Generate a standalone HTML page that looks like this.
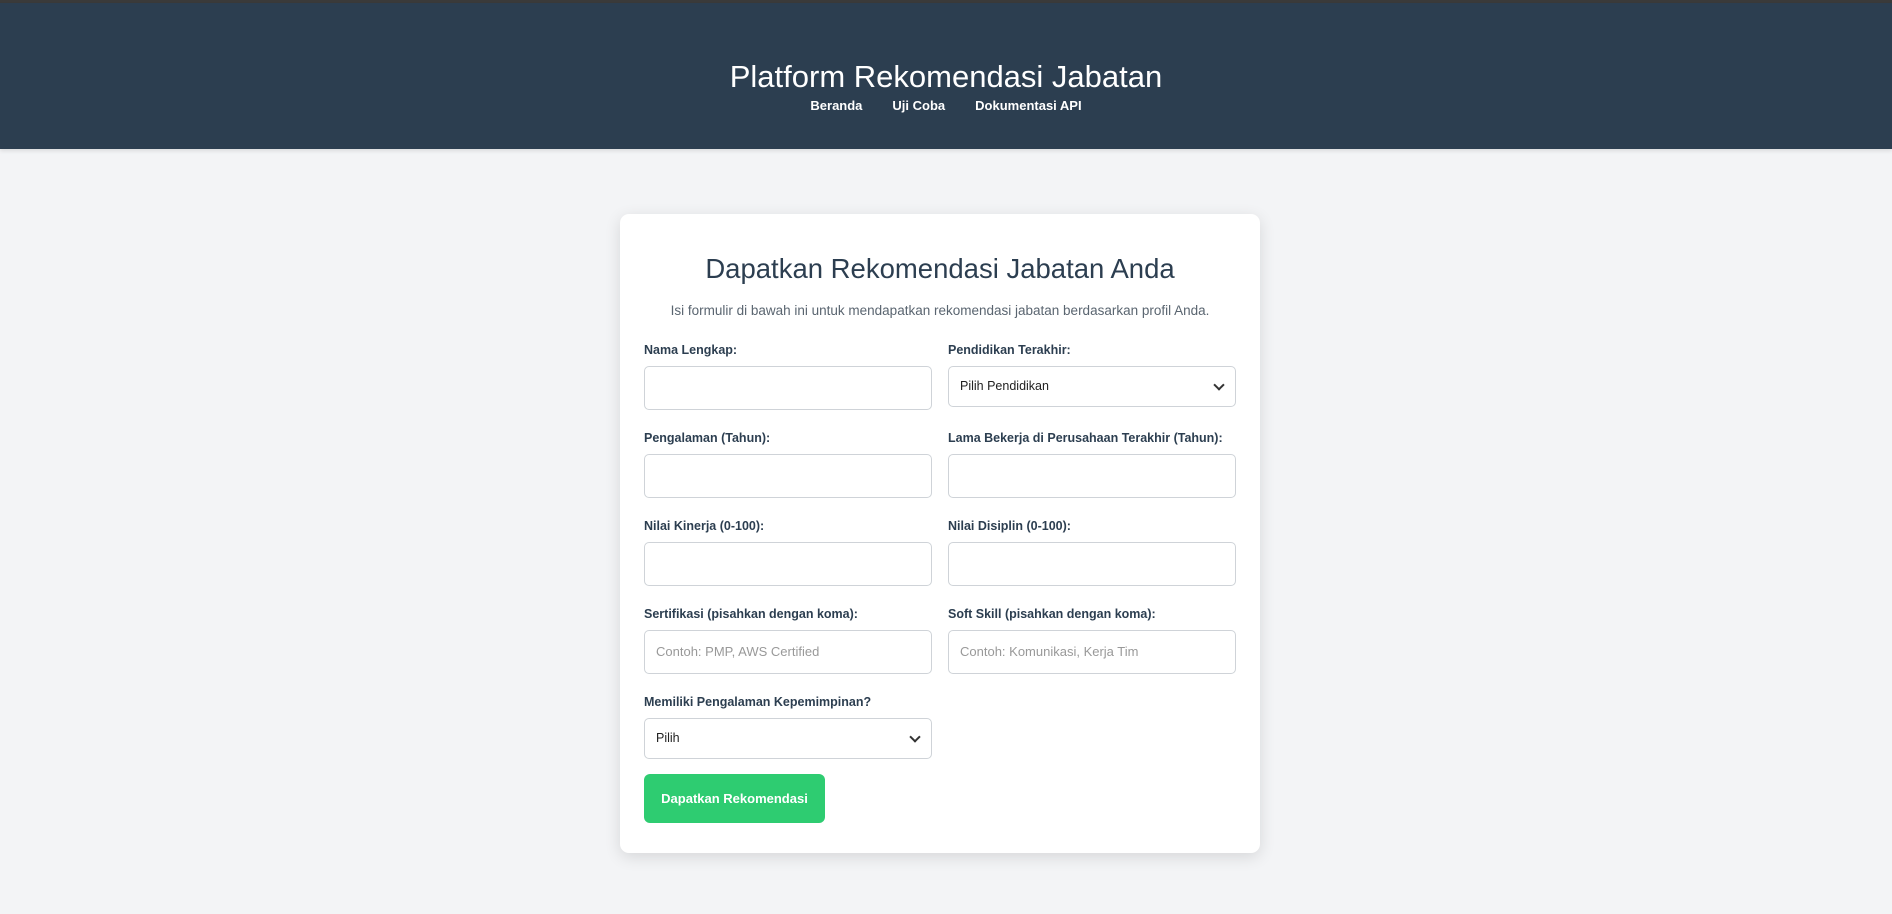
<!DOCTYPE html>
<html><head><meta charset="utf-8"><style>
*{box-sizing:border-box;margin:0;padding:0}
body{width:1892px;height:914px;background:#f3f4f6;font-family:"Liberation Sans",sans-serif;color:#2c3e50;overflow:hidden;border-top:3px solid #3a3a3a}
header{background:#2c3e50;height:146px;text-align:center;color:#fff;box-shadow:0 2px 4px rgba(0,0,0,.1)}
header h1{font-weight:400;font-size:31px;padding-top:56px;line-height:36px}
nav{margin-top:3px;font-size:13px;font-weight:bold}
nav a{color:#fff;text-decoration:none;margin:0 15px}
.card{position:absolute;left:620px;top:214px;width:640px;height:639px;background:#fff;border-radius:9px;box-shadow:0 4px 16px rgba(0,0,0,.12);padding:0 24px}
.card h2{text-align:center;font-weight:400;font-size:27.5px;margin-top:38px;line-height:34px}
.sub{text-align:center;font-size:13.5px;color:#5a6570;margin-top:17px}
.grid{display:grid;grid-template-columns:288px 288px;column-gap:16px;margin-top:25px}
.f{height:88px}
label{display:block;font-size:12.5px;font-weight:bold;margin-bottom:7px;height:16px}
.in{height:44px;border:1px solid #cfd3d8;border-radius:5px;font-size:13px;color:#999;padding:0 11px;line-height:42px;position:relative}
.sel{height:41px;color:#222;line-height:39px;font-size:12.5px}
.sel:after{content:"";position:absolute;right:12px;top:14px;width:6px;height:6px;border-right:2px solid #333;border-bottom:2px solid #333;transform:rotate(45deg)}
.btn{width:181px;height:49px;background:#2ecc71;color:#fff;border-radius:6px;font-weight:bold;font-size:13px;line-height:49px;text-align:center;margin-top:-9px}
</style></head><body>
<header><h1>Platform Rekomendasi Jabatan</h1>
<nav><a>Beranda</a><a>Uji Coba</a><a>Dokumentasi API</a></nav></header>
<div class="card">
<h2>Dapatkan Rekomendasi Jabatan Anda</h2>
<p class="sub">Isi formulir di bawah ini untuk mendapatkan rekomendasi jabatan berdasarkan profil Anda.</p>
<div class="grid">
<div class="f"><label>Nama Lengkap:</label><div class="in"></div></div>
<div class="f"><label>Pendidikan Terakhir:</label><div class="in sel">Pilih Pendidikan</div></div>
<div class="f"><label>Pengalaman (Tahun):</label><div class="in"></div></div>
<div class="f"><label>Lama Bekerja di Perusahaan Terakhir (Tahun):</label><div class="in"></div></div>
<div class="f"><label>Nilai Kinerja (0-100):</label><div class="in"></div></div>
<div class="f"><label>Nilai Disiplin (0-100):</label><div class="in"></div></div>
<div class="f"><label>Sertifikasi (pisahkan dengan koma):</label><div class="in">Contoh: PMP, AWS Certified</div></div>
<div class="f"><label>Soft Skill (pisahkan dengan koma):</label><div class="in">Contoh: Komunikasi, Kerja Tim</div></div>
<div class="f"><label>Memiliki Pengalaman Kepemimpinan?</label><div class="in sel">Pilih</div></div>
<div></div>
</div>
<div class="btn">Dapatkan Rekomendasi</div>
</div>
</body></html>
